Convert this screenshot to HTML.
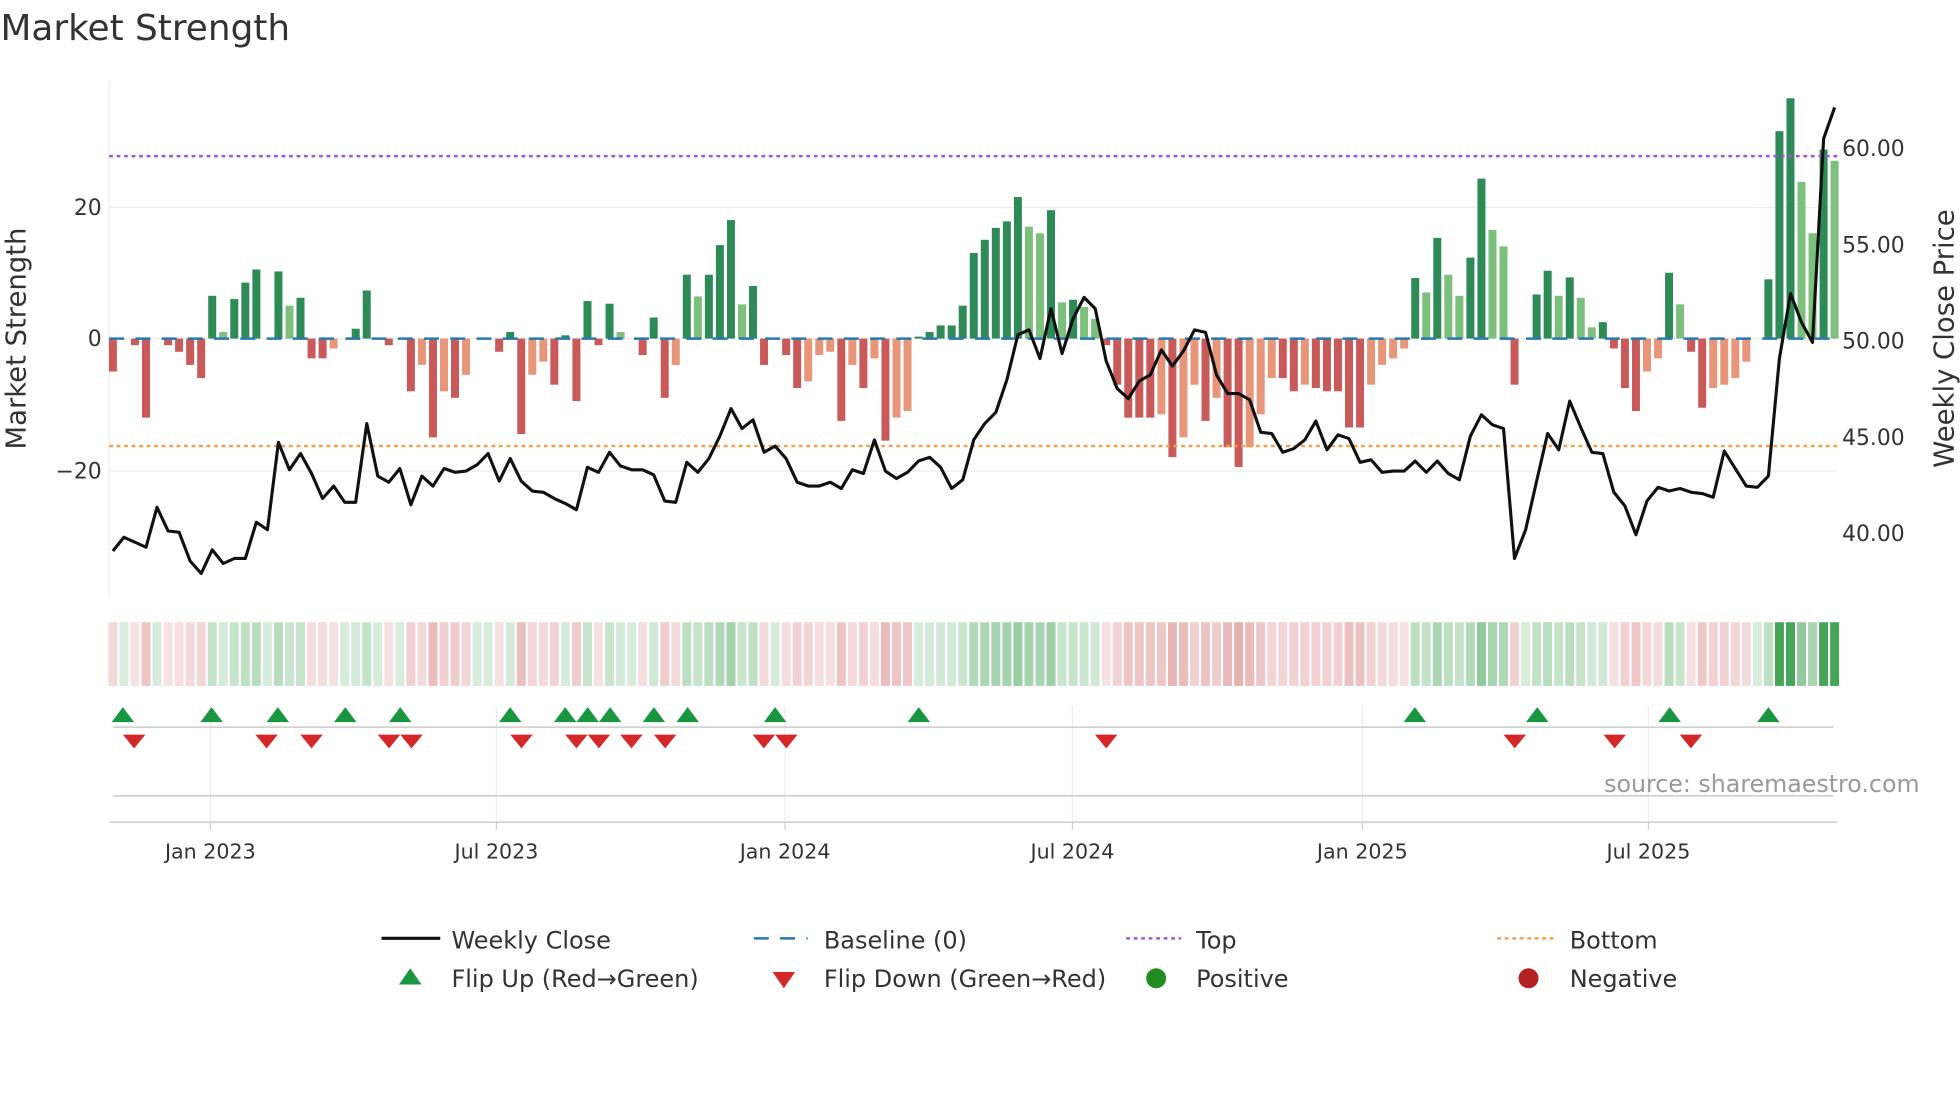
<!DOCTYPE html>
<html><head><meta charset="utf-8"><style>
html,body{margin:0;padding:0;background:#fff;width:1960px;height:1102px;overflow:hidden}
svg{display:block;font-family:"DejaVu Sans","Liberation Sans",sans-serif}
</style></head><body>
<svg id="s" width="1960" height="1102" viewBox="0 0 1568 882" xmlns="http://www.w3.org/2000/svg">
<rect width="1568" height="882" fill="#fff"/>
<text x="0" y="32" font-size="28.7" fill="#333">Market Strength</text>
<g stroke="#ececec" stroke-width="1">
<line x1="87" y1="166" x2="1470" y2="166"/>
<line x1="87" y1="271" x2="1470" y2="271"/>
<line x1="87" y1="377" x2="1470" y2="377"/>
<line x1="87" y1="65" x2="87" y2="478"/>
<line x1="168" y1="565" x2="168" y2="658"/><line x1="397" y1="565" x2="397" y2="658"/>
<line x1="628" y1="565" x2="628" y2="658"/><line x1="858" y1="565" x2="858" y2="658"/>
<line x1="1090" y1="565" x2="1090" y2="658"/><line x1="1319" y1="565" x2="1319" y2="658"/>
</g>
<g id="bars"></g>
<line x1="87" y1="271" x2="1470" y2="271" stroke="#2878b0" stroke-width="2" stroke-dasharray="12,9"/>
<line x1="87" y1="125" x2="1470" y2="125" stroke="#9b59d6" stroke-width="2" stroke-dasharray="3,3"/>
<line x1="87" y1="357" x2="1470" y2="357" stroke="#f0a050" stroke-width="2" stroke-dasharray="3,3"/>
<polyline id="pl" fill="none" stroke="#111" stroke-width="2.5" stroke-linejoin="round"/>
<g id="heat"></g>
<line x1="90" y1="582" x2="1467" y2="582" stroke="#ccc" stroke-width="1.2"/>
<g id="flips"></g>
<line x1="90" y1="637" x2="1467" y2="637" stroke="#ccc" stroke-width="1.2"/>
<line x1="87" y1="658" x2="1470" y2="658" stroke="#ccc" stroke-width="1.2"/>
<g stroke="#ccc"><line x1="168" y1="658" x2="168" y2="664"/><line x1="397" y1="658" x2="397" y2="664"/><line x1="628" y1="658" x2="628" y2="664"/><line x1="858" y1="658" x2="858" y2="664"/><line x1="1090" y1="658" x2="1090" y2="664"/><line x1="1319" y1="658" x2="1319" y2="664"/></g>
<g font-size="16.5" fill="#333" text-anchor="middle">
<text x="168" y="687">Jan 2023</text><text x="397" y="687">Jul 2023</text><text x="628" y="687">Jan 2024</text><text x="858" y="687">Jul 2024</text><text x="1090" y="687">Jan 2025</text><text x="1319" y="687">Jul 2025</text>
</g>
<text x="1536" y="634" font-size="19" fill="#999" text-anchor="end">source: sharemaestro.com</text>
<g font-size="17.5" fill="#333" text-anchor="end">
<text x="81" y="172">20</text><text x="81" y="277">0</text><text x="81" y="383">−20</text>
</g>
<g font-size="17.5" fill="#333">
<text x="1474" y="125">60.00</text><text x="1474" y="202">55.00</text><text x="1474" y="279">50.00</text><text x="1474" y="356">45.00</text><text x="1474" y="433">40.00</text>
</g>
<text transform="translate(20,271) rotate(-90)" font-size="22" fill="#333" text-anchor="middle">Market Strength</text>
<text transform="translate(1563,271) rotate(-90)" font-size="22" fill="#333" text-anchor="middle">Weekly Close Price</text>
<g font-size="19.2" fill="#333">
<line x1="305" y1="751" x2="352" y2="751" stroke="#111" stroke-width="2.5"/><text x="361" y="759">Weekly Close</text>
<line x1="603" y1="751" x2="646" y2="751" stroke="#2878b0" stroke-width="2" stroke-dasharray="12,9"/><text x="659" y="759">Baseline (0)</text>
<line x1="901" y1="751" x2="945" y2="751" stroke="#9b59d6" stroke-width="2" stroke-dasharray="3,3"/><text x="957" y="759">Top</text>
<line x1="1198" y1="751" x2="1243" y2="751" stroke="#f0a050" stroke-width="2" stroke-dasharray="3,3"/><text x="1256" y="759">Bottom</text>
<polygon points="319,788 337,788 328,775" fill="#1a9641"/><text x="361" y="790">Flip Up (Red→Green)</text>
<polygon points="618,778 636,778 627,791" fill="#d62728"/><text x="659" y="790">Flip Down (Green→Red)</text>
<circle cx="925" cy="783" r="8" fill="#228b22"/><text x="957" y="790">Positive</text>
<circle cx="1223" cy="783" r="8" fill="#b22222"/><text x="1256" y="790">Negative</text>
</g>
</svg>
<script>
var V=[-5,0,-1,-12,0,-1,-2,-4,-6,6.5,1,6,8.5,10.5,0,10.2,5,6.2,-3,-3,-1.5,0,1.5,7.3,0,-1,0,-8,-4,-15,-8,-9,-5.5,0,0,-2,1,-14.5,-5.5,-3.5,-7,0.5,-9.5,5.7,-1,5.3,1,0,-2.5,3.2,-9,-4,9.7,6.4,9.7,14.2,18,5.2,8,-4,0,-2.5,-7.5,-6.5,-2.5,-2,-12.5,-4,-7.5,-3,-15.5,-12,-11,0.3,1,2,2,5,13,15,16.8,17.8,21.5,17,16,19.5,5.5,5.9,4.8,3,-1,-7,-12,-12,-12,-11.5,-18,-15,-7,-12.5,-9,-16.5,-19.5,-16.5,-11.5,-6,-6,-8,-7,-7.5,-8,-8,-13.5,-13.5,-7,-4,-3,-1.5,9.2,7,15.3,9.7,6.5,12.3,24.3,16.5,14,-7,0,6.7,10.3,6.5,9.3,6.2,1.7,2.5,-1.5,-7.5,-11,-5,-3,10,5.2,-2,-10.5,-7.5,-7,-6,-3.5,0,9,31.5,36.5,23.8,16,28.7,27];
var Y=[441,430,434,438,406,425,426,449,459,440,451,447,447,418,424,354,376,363,379,399,389,402,402,339,381,386,375,404,381,389,375,378,377,372,363,385,367,385,393,394,399,403,408,374,378,362,373,376,376,380,401,402,370,378,367,349,327,343,336,362,357,367,386,389,389,386,391,376,379,352,377,383,378,369,366,374,391,384,352,339,330,304,268,264,287,247,283,255,238,247,289,311,319,305,300,280,293,281,264,266,300,315,315,320,346,347,362,359,352,337,360,348,351,370,368,378,377,377,369,378,369,379,384,349,332,340,343,447,424,385,347,360,321,342,362,363,394,405,428,401,390,393,391,394,395,398,361,375,389,390,381,287,235,258,274,111,86];
var n=V.length,x0=90,dx=(1468-90)/(n-1),ns="http://www.w3.org/2000/svg";
function el(t,a,p){var e=document.createElementNS(ns,t);for(var k in a)e.setAttribute(k,a[k]);p.appendChild(e);}
var B=document.getElementById('bars'),H=document.getElementById('heat'),F=document.getElementById('flips');
var pts=[];
for(var i=0;i<n;i++){var v=V[i],x=x0+i*dx,p=i?V[i-1]:0,c;
 if(v>0)c=(v>=p)?'#2e8b57':'#7dbf7d';else c=(v<=p)?'#c85a5a':'#e8967a';
 if(v!=0){var h=Math.abs(v)*5.27;el('rect',{x:x-3.2,y:v>0?271-h:271,width:6.4,height:h,fill:c},B);}
 var a=Math.min(1,0.25+Math.abs(v)/40);
 var hc=v>=0?'rgba(60,160,80,'+(v>25?0.95:a*0.6+0.05)+')':'rgba(200,80,80,'+(a*0.6)+')';
 el('rect',{x:x-3.6,y:498,width:7.2,height:51,fill:hc},H);
 pts.push(x.toFixed(1)+','+Y[Math.min(i,Y.length-1)]);}
document.getElementById('pl').setAttribute('points',pts.join(' '));
var up=[98,169,222,276,320,408,452,470,488,523,550,620,735,1132,1230,1336,1415],dn=[107,213,249,311,329,417,461,479,505,532,611,629,885,1212,1292,1353];
up.forEach(function(x){el('polygon',{points:(x-9)+',578 '+(x+9)+',578 '+x+',566',fill:'#1a9641'},F);});
dn.forEach(function(x){el('polygon',{points:(x-9)+',588 '+(x+9)+',588 '+x+',599',fill:'#d62728'},F);});
</script>
</body></html>
